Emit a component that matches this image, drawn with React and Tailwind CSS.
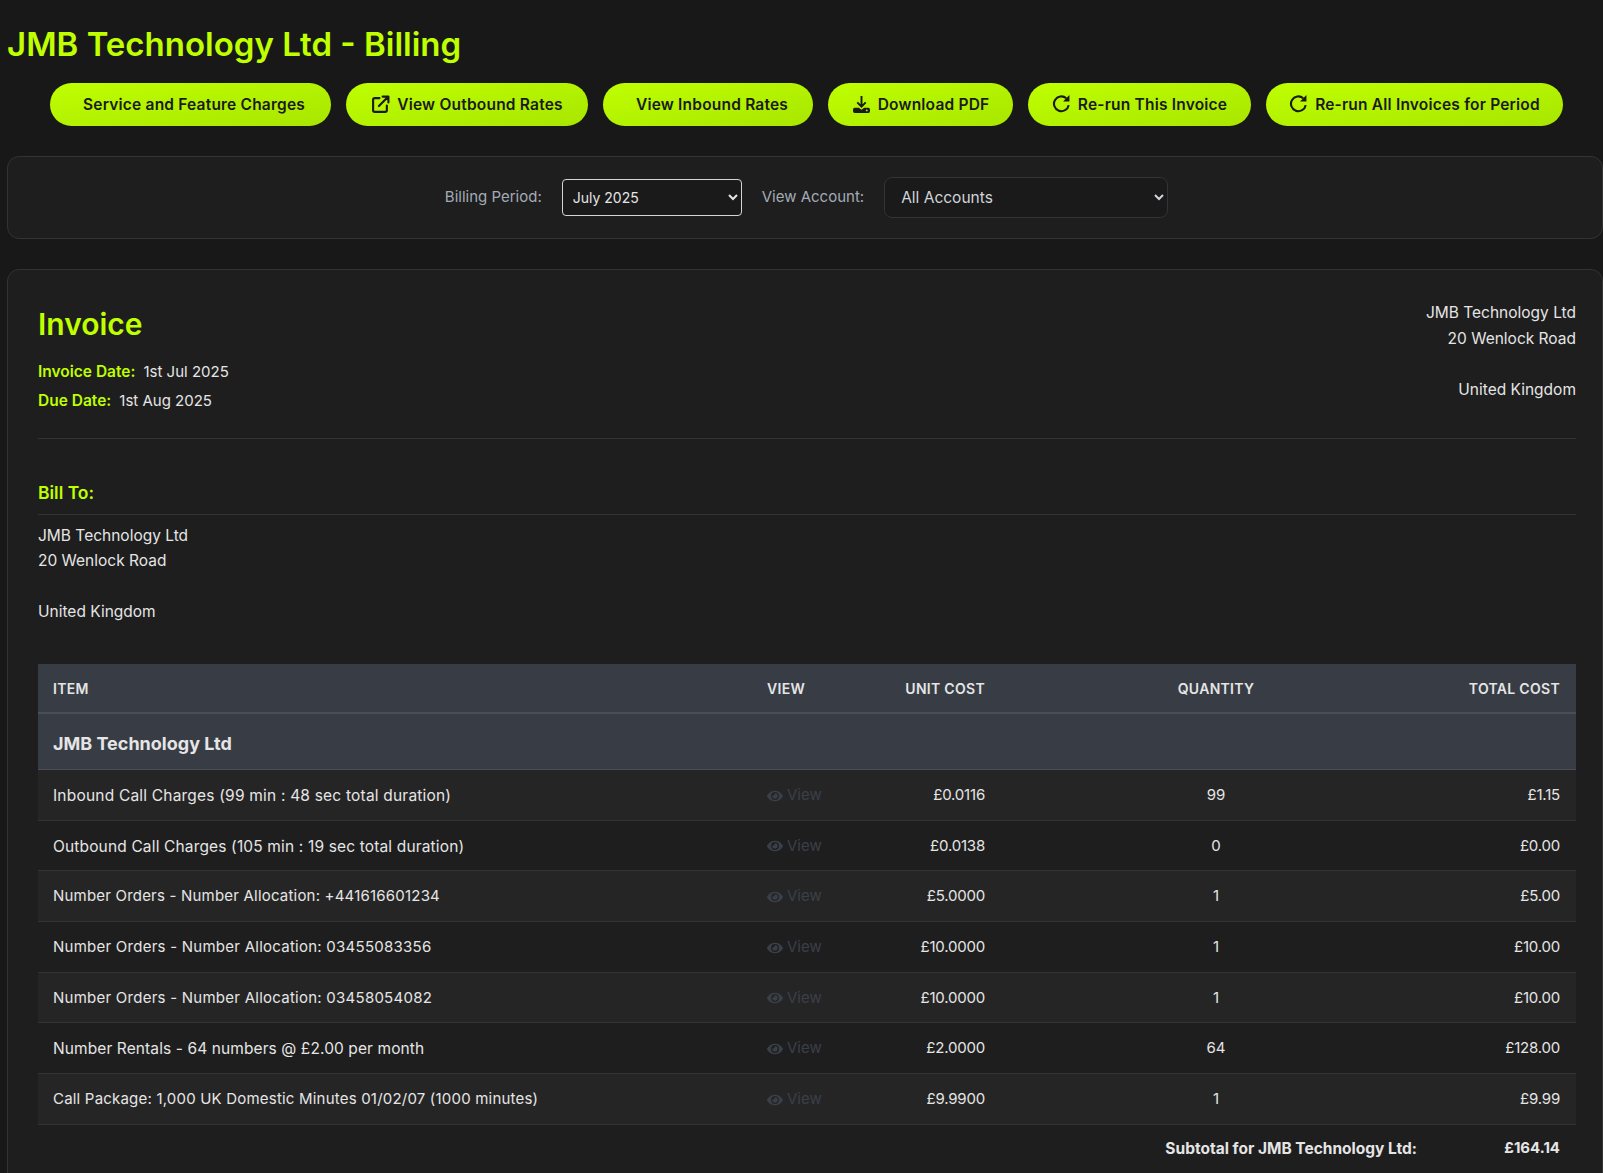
import { FaEye } from 'react-icons/fa';

const rows = [
  { item: 'Inbound Call Charges (99 min : 48 sec total duration)', unit: '£0.0116', qty: '99', total: '£1.15', cls: 'text-[15.500px] tracking-[0.2px]' },
  { item: 'Outbound Call Charges (105 min : 19 sec total duration)', unit: '£0.0138', qty: '0', total: '£0.00', cls: 'text-[15.500px] tracking-[0.15px]' },
  { item: 'Number Orders - Number Allocation: +441616601234', unit: '£5.0000', qty: '1', total: '£5.00', cls: 'text-[15px] tracking-[0.2px]' },
  { item: 'Number Orders - Number Allocation: 03455083356', unit: '£10.0000', qty: '1', total: '£10.00', cls: 'text-[15px] tracking-[0.25px]' },
  { item: 'Number Orders - Number Allocation: 03458054082', unit: '£10.0000', qty: '1', total: '£10.00', cls: 'text-[15px] tracking-[0.25px]' },
  { item: 'Number Rentals - 64 numbers @ £2.00 per month', unit: '£2.0000', qty: '64', total: '£128.00', cls: 'text-[15.500px] tracking-[0.1px]' },
  { item: 'Call Package: 1,000 UK Domestic Minutes 01/02/07 (1000 minutes)', unit: '£9.9900', qty: '1', total: '£9.99', cls: 'text-[15px] tracking-[0.2px]' },
];

function ExternalIcon() {
  return (
    <svg viewBox="0 0 18 18" className="w-[19px] h-[19px]" fill="none" stroke="currentColor" strokeWidth="2" strokeLinecap="round" strokeLinejoin="round">
      <path d="M8 3H3.500A1.500 1.500 0 0 0 2 4.500V14.500A1.500 1.500 0 0 0 3.500 16H13.500A1.500 1.500 0 0 0 15 14.500V10" />
      <path d="M7.500 10.500L16 2M11 1.500H16.500V7" />
    </svg>
  );
}

function DownloadIcon() {
  return (
    <svg viewBox="0 0 18 18" className="w-[19px] h-[19px]" fill="none">
      <path d="M9 1V10.500M5 7L9 11L13 7" stroke="currentColor" strokeWidth="1.800" />
      <path d="M2.500 12H6.500L9 14L11.500 12H15.500A1.500 1.500 0 0 1 17 13.500V15.500A1.500 1.500 0 0 1 15.500 17H2.500A1.500 1.500 0 0 1 1 15.500V13.500A1.500 1.500 0 0 1 2.500 12Z" fill="currentColor" />
      <circle cx="14" cy="14.600" r="0.900" fill="#b4f000" />
    </svg>
  );
}

function RedoIcon() {
  return (
    <svg viewBox="0 0 18 18" className="w-[19px] h-[19px] -mt-[2px]" fill="none">
      <path d="M13.500 4A7 7 0 1 0 15.800 10.500" stroke="currentColor" strokeWidth="2" />
      <path d="M16.500 1V7H10.500Z" fill="currentColor" />
    </svg>
  );
}

function ActionButton({ icon, pad, children }) {
  return (
    <button className={`flex items-center justify-center gap-[7px] h-[43px] rounded-[22px] bg-gradient-to-br from-[#bfff00] to-[#a8e600] text-[#1a1a1a] text-[15.500px] font-semibold tracking-[0.2px] ${pad}`}>
      {icon}
      {children}
    </button>
  );
}

export default function App() {
  const font = { fontFamily: 'Inter, "Noto Sans", sans-serif' };

  return (
    <div className="h-screen overflow-hidden bg-[#181818] pl-[7px] text-[#e5e5e5]" style={font}>
      <h1 className="pt-[25px] h-[83px] text-[33px] leading-[38px] font-semibold text-[#bfff00]">JMB Technology Ltd - Billing</h1>

      <div className="flex justify-center gap-[15px] pl-[3px]">
        <ActionButton pad="w-[281px] pl-[7px]">Service and Feature Charges</ActionButton>
        <ActionButton pad="w-[242px]" icon={<ExternalIcon />}>View Outbound Rates</ActionButton>
        <ActionButton pad="w-[210px] pl-[8px]">View Inbound Rates</ActionButton>
        <ActionButton pad="w-[185px]" icon={<DownloadIcon />}>Download PDF</ActionButton>
        <ActionButton pad="w-[223px]" icon={<RedoIcon />}>Re-run This Invoice</ActionButton>
        <ActionButton pad="w-[297px]" icon={<RedoIcon />}>Re-run All Invoices for Period</ActionButton>
      </div>

      <div className="mt-[30px] h-[83px] flex items-center justify-center rounded-xl border border-[#333] bg-[#1e1e1e] text-[15px] pl-[3px]">
        <div className="flex items-center">
          <label className="text-[#a4abb6]">Billing Period:</label>
          <select className="ml-[20px] w-[180px] h-[37px] pl-[6px] rounded border border-[#d5d5d5] bg-[#1a1a1a] text-[14px] text-[#e5e5e5]">
            <option>July 2025</option>
          </select>
          <label className="ml-[20px] text-[#a4abb6]">View Account:</label>
          <select className="ml-[20px] w-[284px] h-[41px] pl-[12px] rounded-lg border border-[#333] bg-[#1a1a1a] text-[15.500px] text-[#d1d5db]">
            <option>All Accounts</option>
          </select>
        </div>
      </div>

      <div className="mt-[30px] rounded-xl border border-[#333] bg-[#1e1e1e] pl-[30px] pr-[26px] pb-10">
        <div className="flex justify-between h-[169px] border-b border-[#333]">
          <div>
            <h2 className="pt-[34px] text-[30px] leading-[40px] font-semibold text-[#bfff00]">Invoice</h2>
            <p className="mt-[17px] text-[15px] leading-[22px]">
              <strong className="font-semibold text-[15.500px] text-[#bfff00] mr-2">Invoice Date:</strong>1st Jul 2025
            </p>
            <p className="mt-[7px] text-[15px] leading-[22px]">
              <strong className="font-semibold text-[15.500px] text-[#bfff00] mr-2">Due Date:</strong>1st Aug 2025
            </p>
          </div>
          <div className="pt-[30px] text-right text-[15.500px] leading-[25.500px]">
            <div>JMB Technology Ltd</div>
            <div>20 Wenlock Road</div>
            <div className="h-[25.500px]"></div>
            <div>United Kingdom</div>
          </div>
        </div>

        <h3 className="mt-[42px] h-[34px] border-b border-[#333] text-[17.500px] leading-[24px] font-semibold text-[#bfff00]">Bill To:</h3>
        <div className="pt-[8px] text-[15.500px] leading-[25.300px]">
          <div>JMB Technology Ltd</div>
          <div>20 Wenlock Road</div>
          <div className="h-[25.300px]"></div>
          <div>United Kingdom</div>
        </div>

        <table className="mt-[40px] w-full table-fixed border-collapse text-[15px]">
          <colgroup>
            <col className="w-[714px]" />
            <col className="w-[87px]" />
            <col className="w-[161px]" />
            <col className="w-[432px]" />
            <col />
          </colgroup>
          <thead>
            <tr className="h-[49px] bg-[#383d45] border-b-2 border-[#4a4f57] text-[14px] font-semibold uppercase tracking-[0.3px] text-[#e5e5e5]">
              <th className="pl-[15px] text-left font-semibold">Item</th>
              <th className="pl-[15px] text-left font-semibold">View</th>
              <th className="pr-[15px] text-right font-semibold">Unit Cost</th>
              <th className="text-center font-semibold">Quantity</th>
              <th className="pr-[16px] text-right font-semibold">Total Cost</th>
            </tr>
          </thead>
          <tbody>
            <tr className="h-[56px] bg-[#383d45] border-b border-[#4a4f57]">
              <td colSpan={5} className="pl-[15px] pt-[4px] text-[18px] font-bold text-[#e5e5e5]">JMB Technology Ltd</td>
            </tr>
            {rows.map((row, i) => (
              <tr key={i} className={`${i === 1 || i === 4 ? 'h-[50px]' : 'h-[51px]'} border-b border-[#333] ${i % 2 === 0 ? 'bg-[#252525]' : 'bg-[#1e1e1e]'}`}>
                <td className={`pl-[15px] pt-[2px] ${row.cls}`}>{row.item}</td>
                <td className="pl-[15px] pt-[2px]">
                  <span className="flex items-center gap-[4px] text-[#3a404a]"><FaEye className="w-[16px] h-[16px]" />View</span>
                </td>
                <td className="pr-[15px] pt-[2px] text-right tracking-[-0.2px]">{row.unit}</td>
                <td className="pt-[2px] text-center">{row.qty}</td>
                <td className="pr-[16px] pt-[2px] text-right tracking-[-0.2px]">{row.total}</td>
              </tr>
            ))}
            <tr className="h-[48px] font-bold text-[15px]">
              <td colSpan={3}></td>
              <td className="pr-[15px] text-right text-[15.500px]">Subtotal for JMB Technology Ltd:</td>
              <td className="pr-[16px] text-right">£164.14</td>
            </tr>
          </tbody>
        </table>
      </div>
    </div>
  );
}
